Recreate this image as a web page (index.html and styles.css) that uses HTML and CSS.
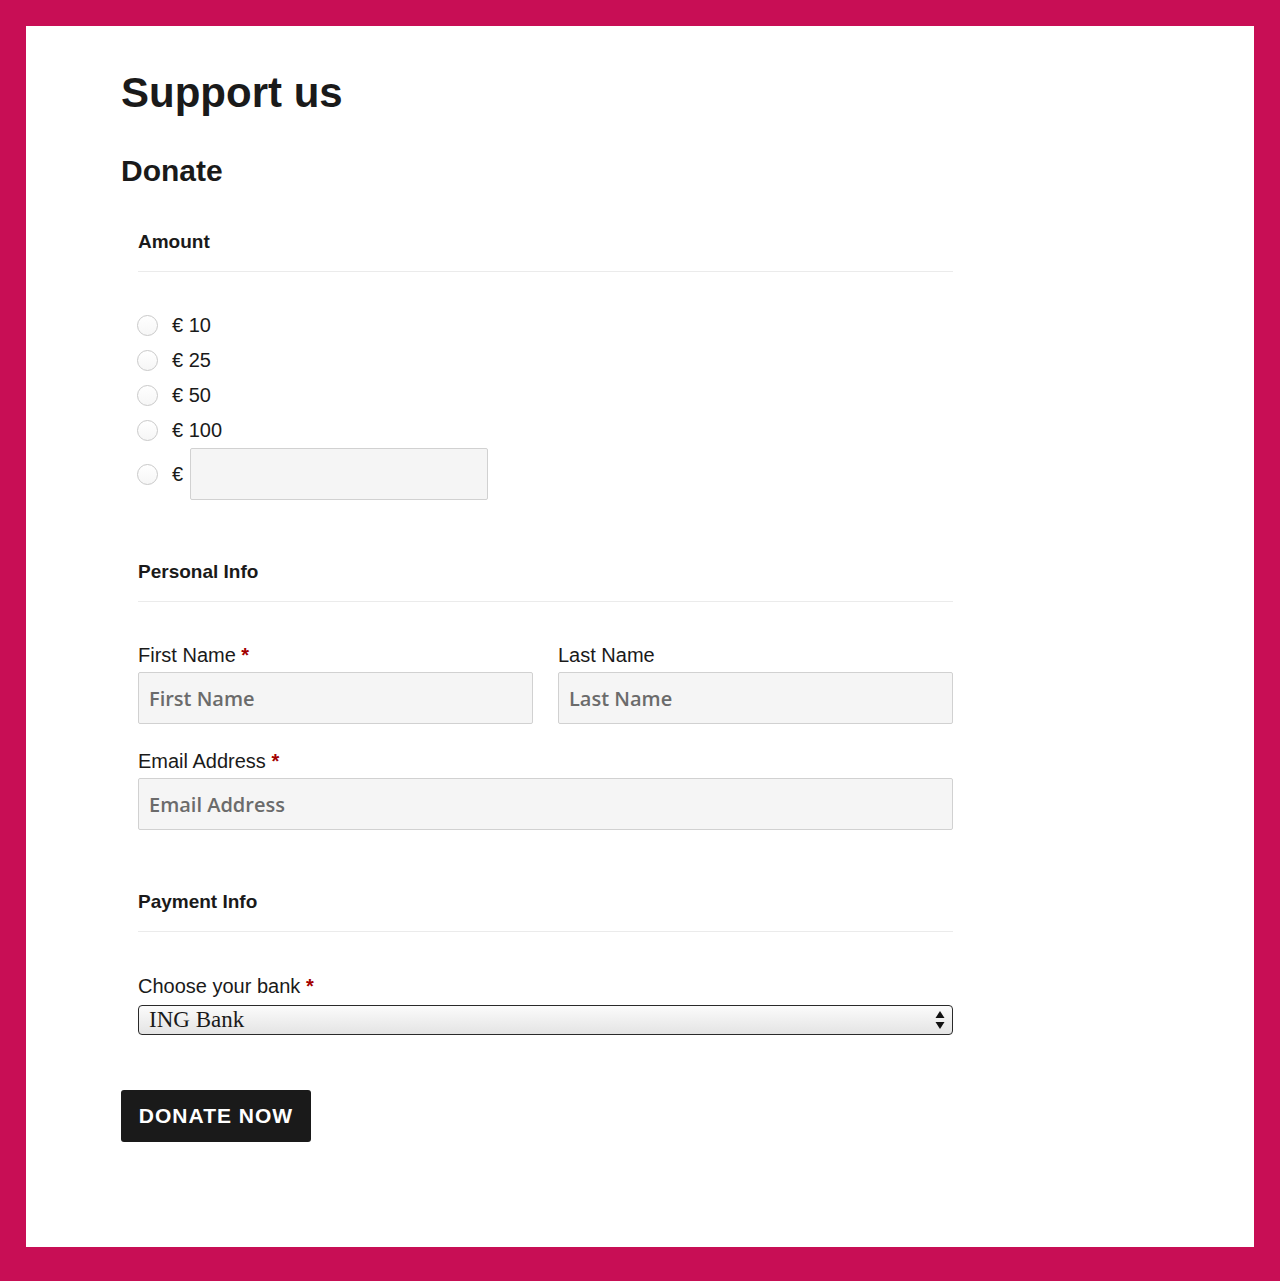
FILE: index.html
```html
<!DOCTYPE html>
<html lang="en">
<head>
<meta charset="utf-8">
<title>Support us</title>
<link rel="stylesheet" href="styles.css">
</head>
<body>
<div class="page">
  <h1 class="title">Support us</h1>
  <h2 class="subtitle">Donate</h2>
  <form class="donate-form">
    <section class="group">
      <div class="legend">Amount</div>
      <div class="amounts">
        <label class="radio-row"><span class="radio"></span><span class="amt">€ 10</span></label>
        <label class="radio-row"><span class="radio"></span><span class="amt">€ 25</span></label>
        <label class="radio-row"><span class="radio"></span><span class="amt">€ 50</span></label>
        <label class="radio-row"><span class="radio"></span><span class="amt">€ 100</span></label>
        <label class="radio-row custom"><span class="radio"></span><span class="amt">€</span><input class="field custom-field" type="text"></label>
      </div>
    </section>
    <section class="group">
      <div class="legend">Personal Info</div>
      <div class="grid-2">
        <div class="item">
          <label class="lbl">First Name <span class="req">*</span></label>
          <input class="field" type="text" placeholder="First Name">
        </div>
        <div class="item">
          <label class="lbl">Last Name</label>
          <input class="field" type="text" placeholder="Last Name">
        </div>
      </div>
      <div class="item email">
        <label class="lbl">Email Address <span class="req">*</span></label>
        <input class="field" type="text" placeholder="Email Address">
      </div>
    </section>
    <section class="group">
      <div class="legend">Payment Info</div>
      <div class="item bank-item">
        <label class="lbl lbl-bank">Choose your bank <span class="req">*</span></label>
        <div class="select-wrap">
          <select class="bank"><option>ING Bank</option></select>
          <svg class="arrows" width="10" height="20" viewBox="0 0 10 20"><path d="M5 1 L9.5 8 L0.5 8 Z" fill="#111"/><path d="M0.5 12 L9.5 12 L5 19 Z" fill="#111"/></svg>
        </div>
      </div>
    </section>
    <button class="btn" type="button">Donate now</button>
  </form>
</div>
</body>
</html>
```
FILE: styles.css
```css
* { box-sizing: border-box; }
html, body { margin: 0; padding: 0; }
body {
  background: #c80e55;
  padding: 26px 26px 34px 26px;
  font-family: "Liberation Sans", Arial, sans-serif;
  color: #1a1a1a;
}
.page {
  background: #fff;
  height: 1221px;
  padding: 42px 0 0 95px;
}
.title {
  margin: 0;
  font-size: 42px;
  line-height: 50px;
  font-weight: 700;
}
.subtitle {
  margin: 35px 0 0 0;
  font-size: 30px;
  line-height: 36px;
  font-weight: 700;
}
.donate-form {
  margin: 41px 0 0 17px;
  width: 815px;
}
.group + .group { margin-top: 60px; }
.legend {
  font-size: 19px;
  line-height: 24px;
  font-weight: 700;
  padding-bottom: 17px;
  border-bottom: 1px solid #ebebeb;
}
.amounts {
  margin-top: 36px;
  display: flex;
  flex-direction: column;
}
.radio-row {
  display: flex;
  align-items: center;
  height: 35px;
  font-size: 20px;
}
.radio-row.custom { height: 52px; }
.radio {
  width: 21px;
  height: 21px;
  border-radius: 50%;
  border: 1.5px solid #c9c9c9;
  background: linear-gradient(#fff, #f6f6f6);
  margin-left: -1px;
}
.amt { margin-left: 14px; }
.field {
  display: block;
  width: 100%;
  height: 52px;
  background: #f5f5f5;
  border: 1px solid #d1d1d1;
  border-radius: 2px;
  padding: 0 10px;
  font-family: "Open Sans", sans-serif;
  font-weight: 600;
  font-size: 20px;
  color: #1a1a1a;
  outline: none;
}
.field::placeholder { color: #6b6b6b; }
.custom-field {
  width: 298px;
  margin-left: 7px;
}
.grid-2 {
  margin-top: 41px;
  display: grid;
  grid-template-columns: 1fr 1fr;
  column-gap: 25px;
}
.lbl {
  display: block;
  font-size: 20px;
  line-height: 24px;
  margin-bottom: 5px;
}
.req { color: #a30000; font-weight: 700; }
.email { margin-top: 25px; }
.bank-item { margin-top: 42px; }
.lbl-bank { margin-bottom: 7px; }
.select-wrap { position: relative; }
.bank {
  appearance: none;
  -webkit-appearance: none;
  display: block;
  width: 100%;
  height: 30px;
  border: 1px solid #2a2a2a;
  border-radius: 4px;
  background: linear-gradient(#fbfbfb, #e4e4e4);
  font-family: "Liberation Serif", "Times New Roman", serif;
  font-size: 23px;
  color: #1a1a1a;
  padding: 0 10px;
  line-height: 28px;
}
.arrows {
  position: absolute;
  right: 8px;
  top: 5px;
}
.btn {
  margin: 55px 0 0 -17px;
  width: 190px;
  height: 52px;
  background: #1a1a1a;
  color: #fff;
  border: none;
  border-radius: 3px;
  font-family: "Liberation Sans", Arial, sans-serif;
  font-weight: 700;
  font-size: 21px;
  letter-spacing: 1px;
  text-transform: uppercase;
  padding: 0;
}
```
